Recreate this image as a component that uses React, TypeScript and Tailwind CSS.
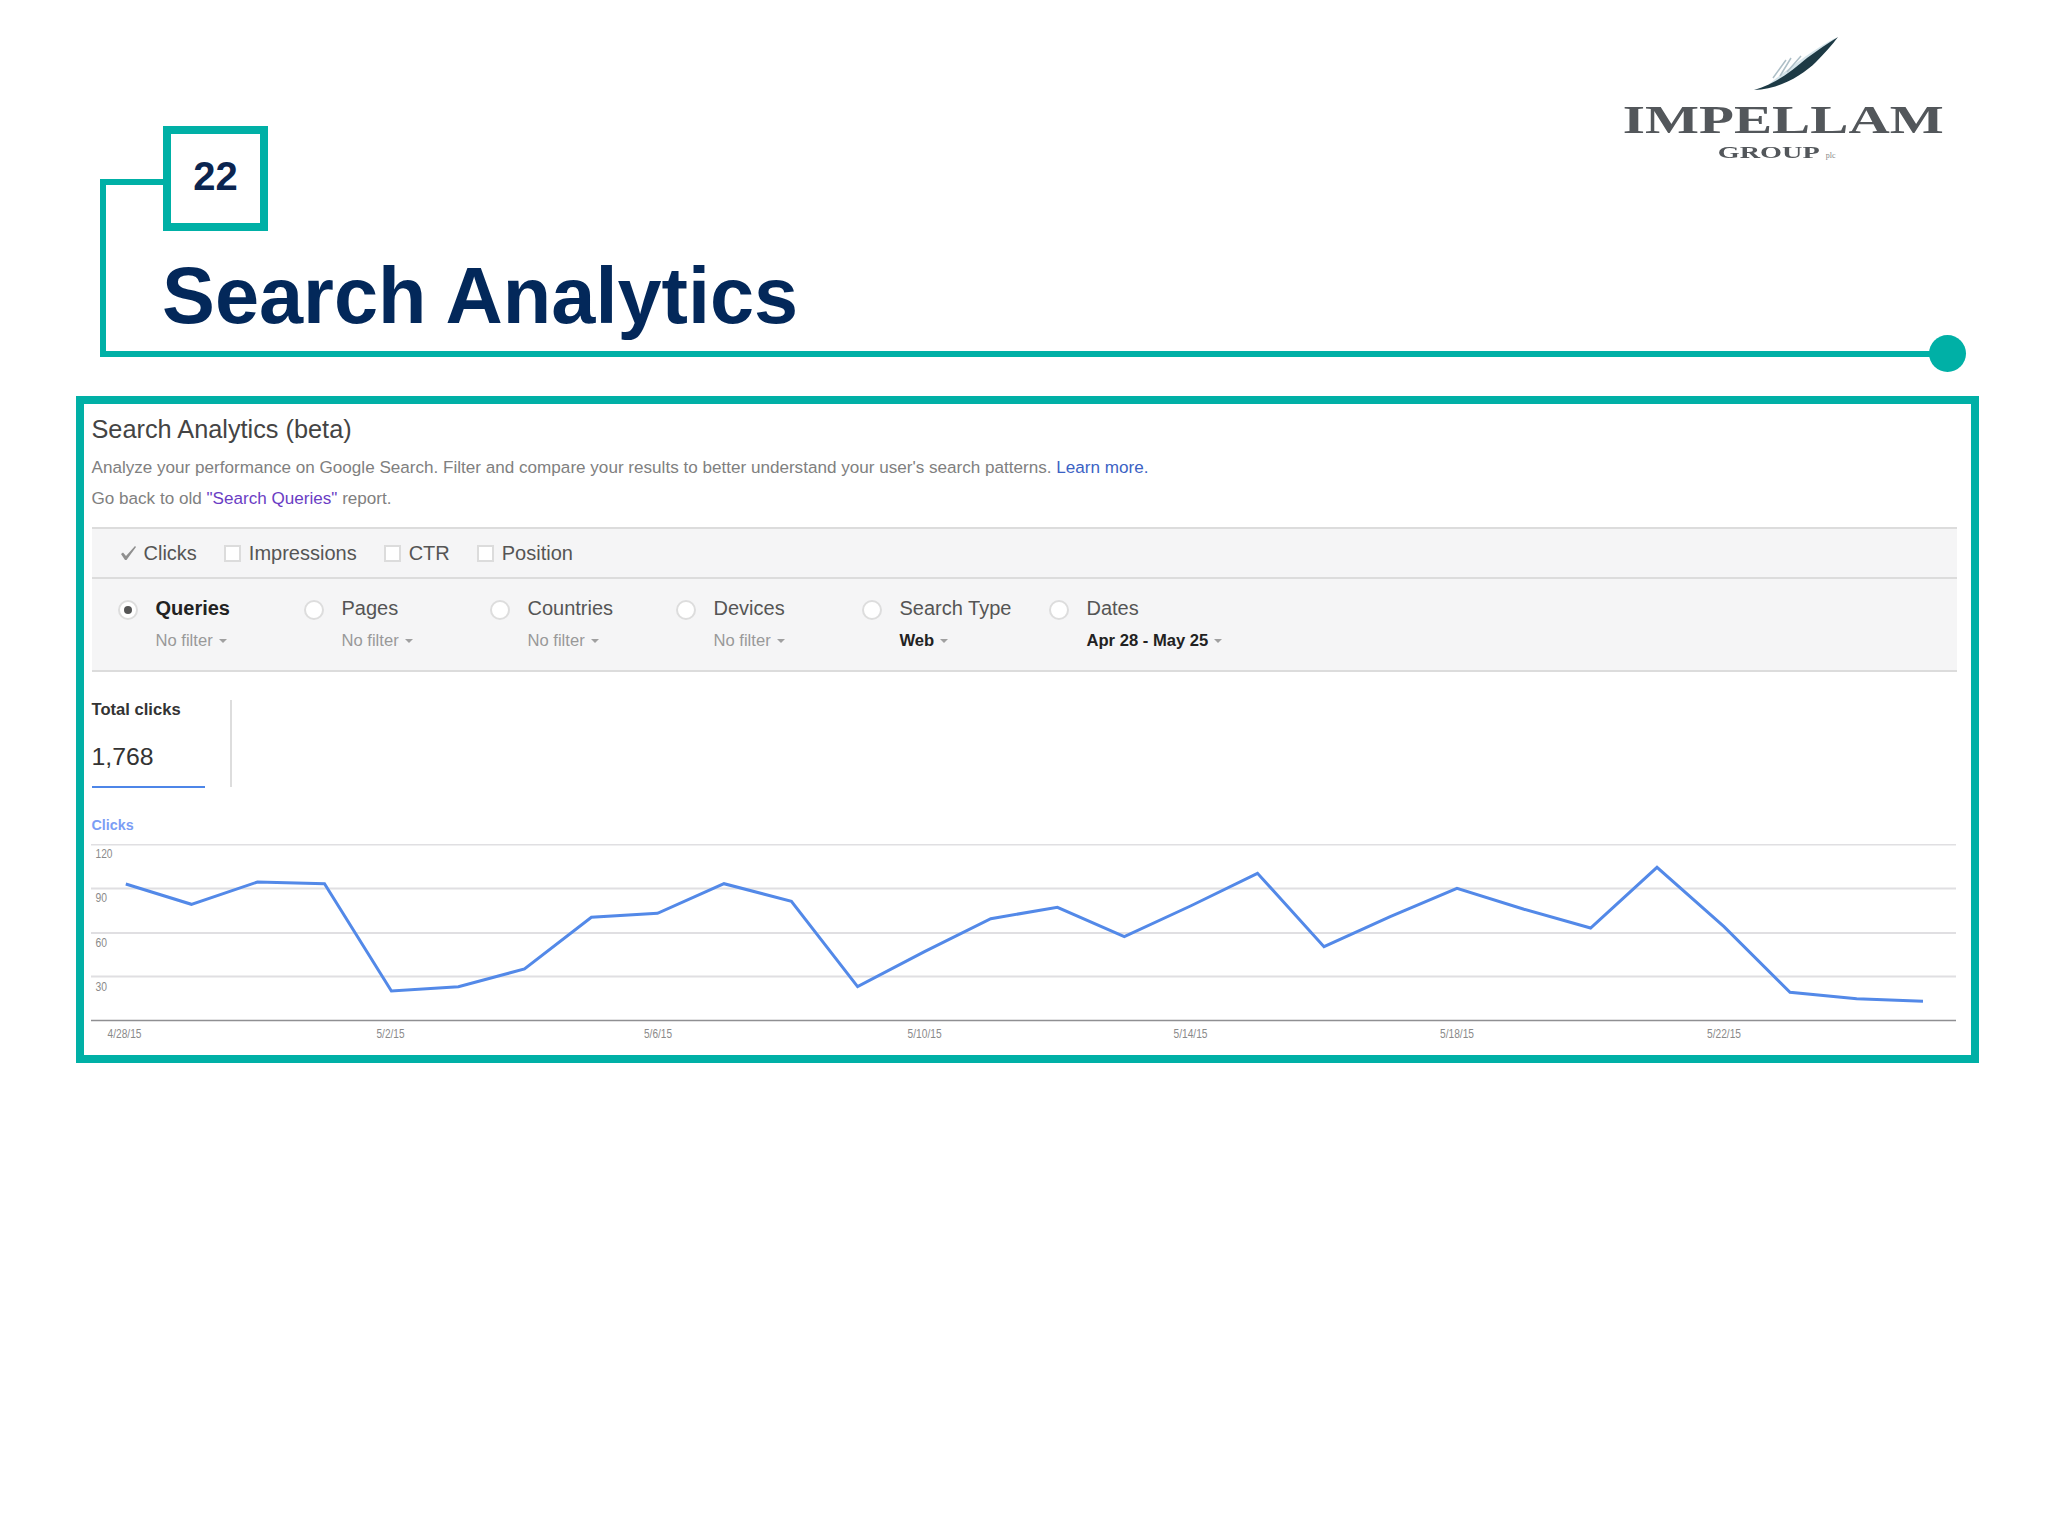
import React from 'react';

const points: [number, number][] = [
  [125.8, 884], [191.4, 904.3], [257.5, 882], [324.5, 883.7], [391.4, 991], [458.4, 986.7],
  [524.5, 969], [591.4, 917.3], [657.5, 913.3], [724, 883.7], [791.4, 901.3], [857.6, 986.7],
  [924.5, 951.7], [990.8, 918.7], [1057.4, 907.3], [1124.3, 936.7], [1190.5, 906], [1257.5, 873.3],
  [1324, 946.7], [1390.2, 916.7], [1457, 888.3], [1524, 909.3], [1590.6, 928], [1657, 867.3],
  [1724, 926.7], [1790, 992.3], [1856.7, 998.7], [1923, 1001.3],
];

const gridLines = [844.5, 888.5, 933, 976.5];

const yLabels = [
  { text: '120', y: 857.5, w: 17 },
  { text: '90', y: 901.5, w: 11.5 },
  { text: '60', y: 947, w: 11.5 },
  { text: '30', y: 990.5, w: 11.5 },
];

const xLabels = [
  { text: '4/28/15', x: 124.5, w: 34 },
  { text: '5/2/15', x: 390.5, w: 28 },
  { text: '5/6/15', x: 658, w: 28 },
  { text: '5/10/15', x: 924.6, w: 34 },
  { text: '5/14/15', x: 1190.5, w: 34 },
  { text: '5/18/15', x: 1457, w: 34 },
  { text: '5/22/15', x: 1724, w: 34 },
];

function Caret() {
  return <span className="ml-[6px] h-0 w-0 border-x-[4px] border-t-[4px] border-x-transparent border-t-[#a0a0a0]" />;
}

function Checkbox({ label }: { label: string }) {
  return (
    <div className="flex items-center gap-[8px]">
      <span className="h-[17px] w-[17px] border-2 border-[#dcdcdc] bg-white" />
      <span>{label}</span>
    </div>
  );
}

function FilterColumn({ label, value, selected, strong, wide }: { label: string; value: string; selected?: boolean; strong?: boolean; wide?: boolean }) {
  return (
    <div className={`flex gap-[18px] ${wide ? 'w-[187px]' : 'w-[186px]'}`}>
      <span className="mt-[4px] flex h-[20px] w-[20px] shrink-0 items-center justify-center rounded-full border-2 border-[#dddddd] bg-white">
        {selected && <span className="h-[8px] w-[8px] rounded-full bg-[#555555]" />}
      </span>
      <div>
        <div className={`whitespace-nowrap text-[20px] leading-[24px] ${selected ? 'font-bold text-[#222222]' : 'text-[#555555]'}`}>{label}</div>
        <div className={`mt-[10px] flex items-center whitespace-nowrap text-[16.6px] leading-[22px] ${strong ? 'font-bold text-[#222222]' : 'text-[#999999]'}`}>
          {value}
          <Caret />
        </div>
      </div>
    </div>
  );
}

function Logo() {
  return (
    <div className="flex w-[320px] flex-col items-center font-['Liberation_Serif',serif] text-[#53575b]">
      <svg className="ml-[26px] -mt-[1px] h-[56px] w-[90px] blur-[0.4px]" viewBox="1750 36 90 56">
        <path d="M1768 84 C1785 70 1812 50 1834 38 C1824 56 1802 76 1772 86 Z" fill="#d5e4ea" />
        <path d="M1772 78 L1785 60 M1779 76 L1790 58 M1786 72 L1800 56" stroke="#aebfc7" strokeWidth="1.5" fill="none" />
        <path d="M1753 90 C1777 90 1802 75 1815 62 C1823 54 1831 45 1837 37 C1827 43 1817 50 1806 58 C1792 70 1775 84 1753 90 Z" fill="#1d3a45" />
      </svg>
      <div className="mt-[8px] flex h-[40px] items-center">
        <span className="inline-block scale-x-[1.43] text-[40px] font-bold leading-[40px] blur-[0.4px]">IMPELLAM</span>
      </div>
      <div className="mt-[3px] ml-[8px] flex h-[20px] items-center">
        <span className="inline-block scale-x-[1.66] text-[17px] font-bold leading-[20px] blur-[0.3px]">GROUP</span>
        <span className="ml-[26px] mt-[5px] text-[8px] leading-[10px] text-[#888888]">plc</span>
      </div>
    </div>
  );
}

function Chart() {
  return (
    <svg className="-ml-[1px] mt-[10px] block h-[200px] w-[1865px]" viewBox="91 844 1865 200">
      {gridLines.map((y) => (
        <line key={y} x1="91" x2="1956" y1={y} y2={y} stroke="#e0dfe2" strokeWidth="1.8" />
      ))}
      <line x1="91" x2="1956" y1="1020.5" y2="1020.5" stroke="#8f8f92" strokeWidth="1.6" />
      <polyline points={points.map((p) => p.join(',')).join(' ')} fill="none" stroke="#5389e8" strokeWidth="3" strokeLinejoin="miter" />
      {yLabels.map((l) => (
        <text key={l.text} x="95.5" y={l.y} fontSize="13" fill="#8a8a8a" textLength={l.w} lengthAdjust="spacingAndGlyphs">{l.text}</text>
      ))}
      {xLabels.map((l) => (
        <text key={l.text} x={l.x} y="1038" textAnchor="middle" fontSize="13" fill="#8a8a8a" textLength={l.w} lengthAdjust="spacingAndGlyphs">{l.text}</text>
      ))}
    </svg>
  );
}

export default function App() {
  return (
    <div className="h-[1536px] w-[2048px] bg-white font-['Liberation_Sans',Arial,sans-serif]">
      <div className="flex h-[179px] justify-end pr-[105px] pt-[37px]">
        <Logo />
      </div>

      <div className="relative ml-[100px] flex h-[178px] w-[1840px] border-b-[6px] border-l-[6px] border-[#00b0a6]">
        <div className="h-[6px] w-[57px] bg-[#00b0a6]" />
        <div>
          <div className="-mt-[53px] flex h-[105px] w-[105px] items-center justify-center border-[8px] border-[#00b0a6] bg-white pb-[6px] text-[40px] font-bold text-[#0b2550]">22</div>
          <h1 className="mt-[20px] -ml-[1px] text-[79.3px] font-bold leading-[90px] text-[#03285a]">Search Analytics</h1>
        </div>
        <span className="absolute -bottom-[21px] -right-[26px] h-[37px] w-[37px] rounded-full bg-[#00b0a6]" />
      </div>

      <section className="ml-[75.5px] mt-[39px] h-[667px] w-[1903.5px] border-[8px] border-[#00b0a6] bg-white pl-[8px] pr-[14px] pt-[10px]">
        <h2 className="text-[25.3px] font-normal leading-[30px] text-[#444444]">Search Analytics (beta)</h2>
        <p className="mt-[12px] text-[17.1px] leading-[24px] text-[#808080]">
          Analyze your performance on Google Search. Filter and compare your results to better understand your user's search patterns. <span className="text-[#3b62c4]">Learn more.</span>
        </p>
        <p className="mt-[7px] text-[17.1px] leading-[24px] text-[#808080]">
          Go back to old <span className="text-[#6a3dc4]">"Search Queries"</span> report.
        </p>

        <div className="mt-[16px] border-y-2 border-[#dcdcdc] bg-[#f5f5f6]">
          <div className="flex h-[50px] items-center gap-[27px] border-b-2 border-[#dcdcdc] pl-[28px] text-[20px] text-[#555555]">
            <div className="flex items-center gap-[7px]">
              <svg className="h-[16px] w-[17px]" viewBox="0 0 17 16">
                <path d="M1 9 L3 7.5 L6 11 L15 1 L16 2 L6.5 15 L5 15 Z" fill="#8f8f8f" />
              </svg>
              <span>Clicks</span>
            </div>
            <Checkbox label="Impressions" />
            <Checkbox label="CTR" />
            <Checkbox label="Position" />
          </div>
          <div className="flex h-[91px] pl-[26px] pt-[17px]">
            <FilterColumn label="Queries" value="No filter" selected />
            <FilterColumn label="Pages" value="No filter" />
            <FilterColumn label="Countries" value="No filter" />
            <FilterColumn label="Devices" value="No filter" />
            <FilterColumn label="Search Type" value="Web" strong wide />
            <FilterColumn label="Dates" value="Apr 28 - May 25" strong />
          </div>
        </div>

        <div className="mt-[28px] flex items-start gap-[25px]">
          <div className="h-[88px] w-[113px] border-b-2 border-[#4d86e8]">
            <div className="text-[16.6px] font-bold leading-[20px] text-[#333333]">Total clicks</div>
            <div className="mt-[22px] text-[24.8px] leading-[30px] text-[#333333]">1,768</div>
          </div>
          <div className="h-[87px] w-[2px] bg-[#dddddd]" />
        </div>

        <div className="mt-[28px] text-[14.3px] font-bold leading-[18px] text-[#7b9df5]">Clicks</div>
        <Chart />
      </section>
    </div>
  );
}
